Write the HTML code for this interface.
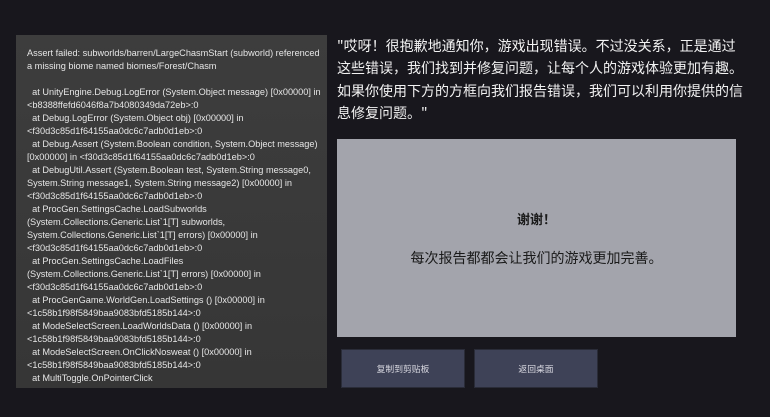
<!DOCTYPE html>
<html><head><meta charset="utf-8"><style>
body{margin:0;width:770px;height:417px;background:#18171d;overflow:hidden;position:relative;font-family:"Liberation Sans","Noto Sans CJK SC",sans-serif}
.log{position:absolute;left:16px;top:35px;width:311px;height:353px;background:linear-gradient(#3d3d3d,#363636);color:#e6e6e6;font-size:9.2px;line-height:13px;box-sizing:border-box;padding:12px 6px 0 11px;overflow:hidden;white-space:nowrap}
.hdr{position:absolute;left:337px;top:35px;color:#f2f2f2;font-size:14px;line-height:22.4px;white-space:nowrap;font-family:"Noto Sans CJK SC",sans-serif}
.panel{position:absolute;left:337px;top:139px;width:399px;height:198px;background:#a3a4ac;color:#1a1a1a;text-align:center;font-family:"Noto Sans CJK SC",sans-serif}
.btn{position:absolute;top:349px;width:124px;height:39px;background:#3e4257;border:1px solid #2a2c38;box-sizing:border-box;color:#d8d8e0;font-size:8.8px;text-align:center;line-height:37px;font-family:"Noto Sans CJK SC",sans-serif}
</style></head><body>
<div class="log">Assert failed: subworlds/barren/LargeChasmStart (subworld) referenced<br>a missing biome named biomes/Forest/Chasm<br><br>
&nbsp;&nbsp;at UnityEngine.Debug.LogError (System.Object message) [0x00000] in<br>&lt;b8388ffefd6046f8a7b4080349da72eb&gt;:0<br>
&nbsp;&nbsp;at Debug.LogError (System.Object obj) [0x00000] in<br>&lt;f30d3c85d1f64155aa0dc6c7adb0d1eb&gt;:0<br>
&nbsp;&nbsp;at Debug.Assert (System.Boolean condition, System.Object message)<br>[0x00000] in &lt;f30d3c85d1f64155aa0dc6c7adb0d1eb&gt;:0<br>
&nbsp;&nbsp;at DebugUtil.Assert (System.Boolean test, System.String message0,<br>System.String message1, System.String message2) [0x00000] in<br>&lt;f30d3c85d1f64155aa0dc6c7adb0d1eb&gt;:0<br>
&nbsp;&nbsp;at ProcGen.SettingsCache.LoadSubworlds<br>(System.Collections.Generic.List`1[T] subworlds,<br>System.Collections.Generic.List`1[T] errors) [0x00000] in<br>&lt;f30d3c85d1f64155aa0dc6c7adb0d1eb&gt;:0<br>
&nbsp;&nbsp;at ProcGen.SettingsCache.LoadFiles<br>(System.Collections.Generic.List`1[T] errors) [0x00000] in<br>&lt;f30d3c85d1f64155aa0dc6c7adb0d1eb&gt;:0<br>
&nbsp;&nbsp;at ProcGenGame.WorldGen.LoadSettings () [0x00000] in<br>&lt;1c58b1f98f5849baa9083bfd5185b144&gt;:0<br>
&nbsp;&nbsp;at ModeSelectScreen.LoadWorldsData () [0x00000] in<br>&lt;1c58b1f98f5849baa9083bfd5185b144&gt;:0<br>
&nbsp;&nbsp;at ModeSelectScreen.OnClickNosweat () [0x00000] in<br>&lt;1c58b1f98f5849baa9083bfd5185b144&gt;:0<br>
&nbsp;&nbsp;at MultiToggle.OnPointerClick</div>
<div class="hdr">"哎呀！很抱歉地通知你，游戏出现错误。不过没关系，正是通过<br>这些错误，我们找到并修复问题，让每个人的游戏体验更加有趣。<br>如果你使用下方的方框向我们报告错误，我们可以利用你提供的信<br>息修复问题。"</div>
<div class="panel"><div style="position:absolute;left:0;right:0;top:70px;font-size:13px;font-weight:bold">谢谢！</div><div style="position:absolute;left:0;right:0;top:109px;font-size:14px">每次报告都都会让我们的游戏更加完善。</div></div>
<div class="btn" style="left:341px">复制到剪贴板</div>
<div class="btn" style="left:474px">返回桌面</div>
</body></html>
